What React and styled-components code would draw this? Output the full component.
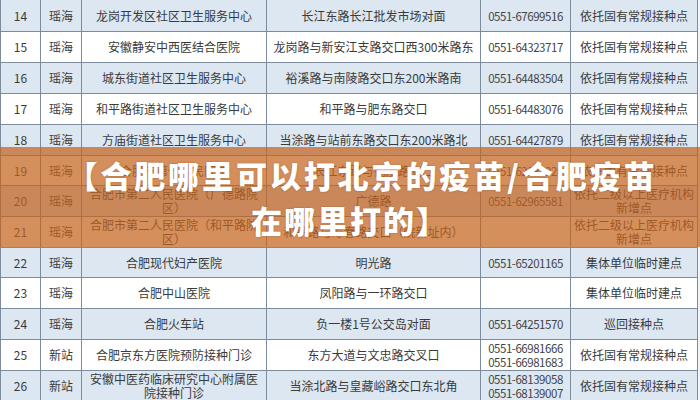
import React from "react";
import styled, { createGlobalStyle } from "styled-components";

const Global = createGlobalStyle`
  html, body { margin: 0; padding: 0; background: #f4f6f8; }
  body { width: 700px; height: 400px; overflow: hidden; }
`;

const Page = styled.div`
  position: relative;
  width: 700px;
  height: 400px;
  overflow: hidden;
  background: #f2f4f6;
  font-family: "Noto Sans CJK SC", "Noto Sans", sans-serif;
`;

const Table = styled.div`
  width: 698px;
  display: flex;
  flex-direction: column;
  gap: 1px;
  background: #7d8c9c;
  padding-bottom: 1px;
`;

const Row = styled.div`
  display: grid;
  grid-template-columns: 39px 40px 184px 213px 89px 126px;
  column-gap: 1px;
  padding: 0 1px;
  height: ${(p) => p.$h}px;
  & > div {
    background: ${(p) => (p.$alt ? "#dce7f2" : "#ffffff")};
  }
`;

const Cell = styled.div`
  display: flex;
  align-items: center;
  justify-content: center;
  text-align: center;
  color: #3a3a3a;
  font-size: 12px;
  line-height: 14px;
  padding: 0 2px;
  overflow: hidden;
  white-space: pre-line;
`;

const Phone = styled(Cell)`
  font-size: 11.5px;
  letter-spacing: -0.45px;
  line-height: 14px;
  color: #444;
`;

const Banner = styled.div`
  position: absolute;
  left: 0;
  top: 147px;
  width: 700px;
  height: 100px;
  background: rgba(196, 100, 30, 0.72);
  display: flex;
  flex-direction: column;
  align-items: center;
  justify-content: center;
`;

const Title = styled.div`
  color: #ffffff;
  font-family: "Noto Sans CJK SC", "Noto Sans", sans-serif;
  font-weight: 900;
  font-size: 31px;
  line-height: 45px;
  letter-spacing: ${(p) => p.$spacing || 1.8}px;
  text-align: center;
  margin-left: ${(p) => p.$shift || 0}px;
  text-shadow: 0 0 2px rgba(90, 40, 10, 0.35);
`;

const rows = [
  { n: 14, d: "瑶海", name: "龙岗开发区社区卫生服务中心", addr: "长江东路长江批发市场对面", tel: "0551-67699516", note: "依托固有常规接种点", h: 31 },
  { n: 15, d: "瑶海", name: "安徽静安中西医结合医院", addr: "龙岗路与新安江支路交口西300米路东", tel: "0551-64323717", note: "依托固有常规接种点", h: 30 },
  { n: 16, d: "瑶海", name: "城东街道社区卫生服务中心", addr: "裕溪路与南陵路交口东200米路南", tel: "0551-64483504", note: "依托固有常规接种点", h: 30 },
  { n: 17, d: "瑶海", name: "和平路街道社区卫生服务中心", addr: "和平路与肥东路交口", tel: "0551-64483076", note: "依托固有常规接种点", h: 30 },
  { n: 18, d: "瑶海", name: "方庙街道社区卫生服务中心", addr: "当涂路与站前东路交口东200米路北", tel: "0551-64427879", note: "依托固有常规接种点", h: 30 },
  { n: 19, d: "瑶海", name: "合肥市第一人民医院", addr: "长江东路与铜陵路交口", tel: "0551-62183920", note: "依托固有常规接种点", h: 29 },
  { n: 20, d: "瑶海", name: "合肥市第二人民医院（广德路院\n区）", addr: "广德路", tel: "0551-62965581", note: "依托二级以上医疗机构\n新增点", h: 30 },
  { n: 21, d: "瑶海", name: "合肥市第二人民医院（和平路院\n区）", addr: "和平路与寿春路交口（院新址内）", tel: "", note: "依托二级以上医疗机构\n新增点", h: 30 },
  { n: 22, d: "瑶海", name: "合肥现代妇产医院", addr: "明光路", tel: "0551-65201165", note: "集体单位临时建点", h: 29 },
  { n: 23, d: "瑶海", name: "合肥中山医院", addr: "凤阳路与一环路交口", tel: "", note: "集体单位临时建点", h: 30 },
  { n: 24, d: "瑶海", name: "合肥火车站", addr: "负一楼1号公交岛对面", tel: "0551-64251570", note: "巡回接种点", h: 30 },
  { n: 25, d: "新站", name: "合肥京东方医院预防接种门诊", addr: "东方大道与文忠路交叉口", tel: "0551-66981666\n0551-66981683", note: "依托固有常规接种点", h: 30 },
  { n: 26, d: "新站", name: "安徽中医药临床研究中心附属医\n院接种门诊", addr: "当涂北路与皇藏峪路交口东北角", tel: "0551-68139058\n0551-68139007", note: "依托固有常规接种点", h: 30 },
];

export default function App() {
  return (
    <Page>
      <Global />
      <Table>
        {rows.map((r) => (
          <Row key={r.n} $alt={r.n % 2 === 0} $h={r.h}>
            <Cell>{r.n}</Cell>
            <Cell>{r.d}</Cell>
            <Cell>{r.name}</Cell>
            <Cell>{r.addr}</Cell>
            <Phone>{r.tel}</Phone>
            <Cell>{r.note}</Cell>
          </Row>
        ))}
      </Table>
      <Banner>
        <Title $shift={24} $spacing={2.9}>【合肥哪里可以打北京的疫苗/合肥疫苗</Title>
        <Title $spacing={2}>在哪里打的】</Title>
      </Banner>
    </Page>
  );
}
